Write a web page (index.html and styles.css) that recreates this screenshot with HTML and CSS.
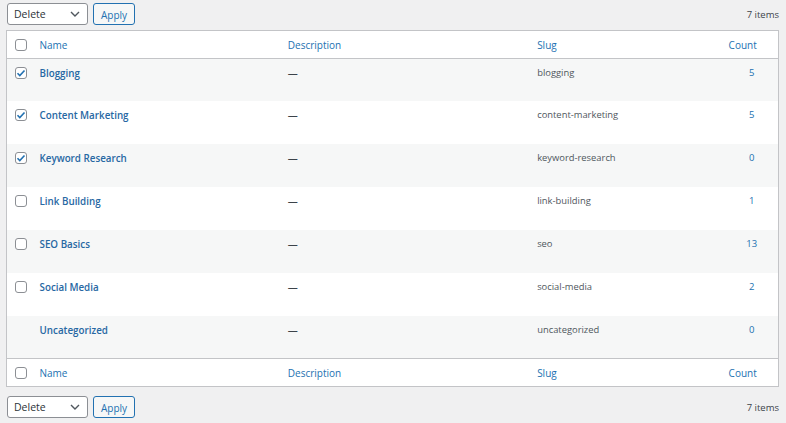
FILE: index.html
```html
<!DOCTYPE html>
<html>
<head>
<meta charset="utf-8">
<link rel="stylesheet" href="styles.css">
</head>
<body>
<div class="page">
  <div class="toolbar top">
    <div class="actions">
      <div class="select"><span>Delete</span><svg class="chev" viewBox="0 0 10 6" width="10" height="6"><path d="M1 1l4 4 4-4" fill="none" stroke="#50575e" stroke-width="1.4"/></svg></div>
      <button class="btn">Apply</button>
    </div>
    <div class="count-items">7 items</div>
  </div>
  <table class="list">
    <colgroup><col class="c-cb"><col class="c-name"><col class="c-desc"><col class="c-slug"><col class="c-num"></colgroup>
    <thead>
      <tr><th class="cb"><span class="box"></span></th><th class="name">Name</th><th>Description</th><th>Slug</th><th class="num">Count</th></tr>
    </thead>
    <tbody>
      <tr class="alt"><td class="cb"><span class="box on"><svg viewBox="0 0 12 12" width="12" height="12"><path d="M2.5 6.2l2.3 2.3 4.7-5" fill="none" stroke="#2271b1" stroke-width="1.6"/></svg></span></td><td class="name"><a>Blogging</a></td><td class="desc">—</td><td class="slug">blogging</td><td class="num"><a>5</a></td></tr>
      <tr><td class="cb"><span class="box on"><svg viewBox="0 0 12 12" width="12" height="12"><path d="M2.5 6.2l2.3 2.3 4.7-5" fill="none" stroke="#2271b1" stroke-width="1.6"/></svg></span></td><td class="name"><a>Content Marketing</a></td><td class="desc">—</td><td class="slug">content-marketing</td><td class="num"><a>5</a></td></tr>
      <tr class="alt"><td class="cb"><span class="box on"><svg viewBox="0 0 12 12" width="12" height="12"><path d="M2.5 6.2l2.3 2.3 4.7-5" fill="none" stroke="#2271b1" stroke-width="1.6"/></svg></span></td><td class="name"><a>Keyword Research</a></td><td class="desc">—</td><td class="slug">keyword-research</td><td class="num"><a>0</a></td></tr>
      <tr><td class="cb"><span class="box"></span></td><td class="name"><a>Link Building</a></td><td class="desc">—</td><td class="slug">link-building</td><td class="num"><a>1</a></td></tr>
      <tr class="alt"><td class="cb"><span class="box"></span></td><td class="name"><a>SEO Basics</a></td><td class="desc">—</td><td class="slug">seo</td><td class="num"><a>13</a></td></tr>
      <tr><td class="cb"><span class="box"></span></td><td class="name"><a>Social Media</a></td><td class="desc">—</td><td class="slug">social-media</td><td class="num"><a>2</a></td></tr>
      <tr class="alt"><td class="cb"></td><td class="name"><a>Uncategorized</a></td><td class="desc">—</td><td class="slug">uncategorized</td><td class="num"><a>0</a></td></tr>
    </tbody>
    <tfoot>
      <tr><th class="cb"><span class="box"></span></th><th class="name">Name</th><th>Description</th><th>Slug</th><th class="num">Count</th></tr>
    </tfoot>
  </table>
  <div class="toolbar bottom">
    <div class="actions">
      <div class="select"><span>Delete</span><svg class="chev" viewBox="0 0 10 6" width="10" height="6"><path d="M1 1l4 4 4-4" fill="none" stroke="#50575e" stroke-width="1.4"/></svg></div>
      <button class="btn">Apply</button>
    </div>
    <div class="count-items">7 items</div>
  </div>
</div>
</body>
</html>
```
FILE: styles.css
```css
html, body { margin: 0; padding: 0; }
body {
  background: #f0f0f1;
  font-family: "Open Sans", "Noto Sans", sans-serif;
  font-size: 10px;
  color: #3c434a;
}
.page { padding: 3px 7px 0 6px; }
.toolbar { display: flex; justify-content: space-between; align-items: center; height: 22px; }
.toolbar.top { margin-bottom: 5px; }
.toolbar.bottom { margin-top: 9px; }
.actions { display: flex; align-items: center; gap: 5px; padding-left: 1px; }
.select {
  box-sizing: border-box;
  width: 81px; height: 22px;
  border: 1px solid #8c8f94; border-radius: 3px;
  background: #fff;
  display: flex; align-items: center; justify-content: space-between;
  padding: 0 7px 0 6px;
  color: #2c3338; font-size: 10.5px;
}
.chev { display: block; }
.btn {
  box-sizing: border-box;
  width: 42px; height: 22px;
  border: 1px solid #2271b1; border-radius: 3px;
  background: #f6f7f7; color: #2271b1;
  font-family: inherit; font-size: 10px;
  padding: 2px 0 0; margin: 0;
}
.count-items { color: #3c434a; font-size: 9.5px; }
.list {
  width: 773px;
  border-collapse: collapse;
  table-layout: fixed;
  background: #fff;
  border: 1px solid #c3c4c7;
}
.c-cb { width: 23px; } .c-name { width: 248px; } .c-desc { width: 249px; } .c-slug { width: 198px; } .c-num { width: 53px; }
th, td { padding: 0 0 0 10px; text-align: left; vertical-align: top; }
thead th, tfoot th {
  height: 27px; vertical-align: middle; font-weight: 400; color: #2271b1; font-size: 10px;
}
thead tr { border-bottom: 1px solid #c3c4c7; }
tfoot tr { border-top: 1px solid #c3c4c7; }
th.cb, td.cb { padding: 0 0 0 8px; }
th.name, td.name { padding-left: 10px; }
tbody tr { height: 42.86px; }
tbody tr.alt { background: #f6f7f7; }
tbody td { padding-top: 6px; line-height: 16px; }
td.name a { color: #2768a3; font-weight: 600; font-size: 9.8px; }
td.desc { color: #3c434a; }
td.slug { color: #50575e; font-size: 9.4px; }
th.num { text-align: center; padding: 0 18px 0 0; }
td.num { text-align: center; padding-left: 0; padding-right: 0; font-size: 9.5px; }
td.num a { color: #2271b1; }
.box {
  box-sizing: border-box; display: block;
  width: 12px; height: 12px;
  border: 1px solid #8c8f94; border-radius: 3px; background: #fff;
  position: relative;
}
tbody td.cb .box { margin-top: 8px; }
.box svg { position: absolute; left: -1px; top: -1px; }
```
